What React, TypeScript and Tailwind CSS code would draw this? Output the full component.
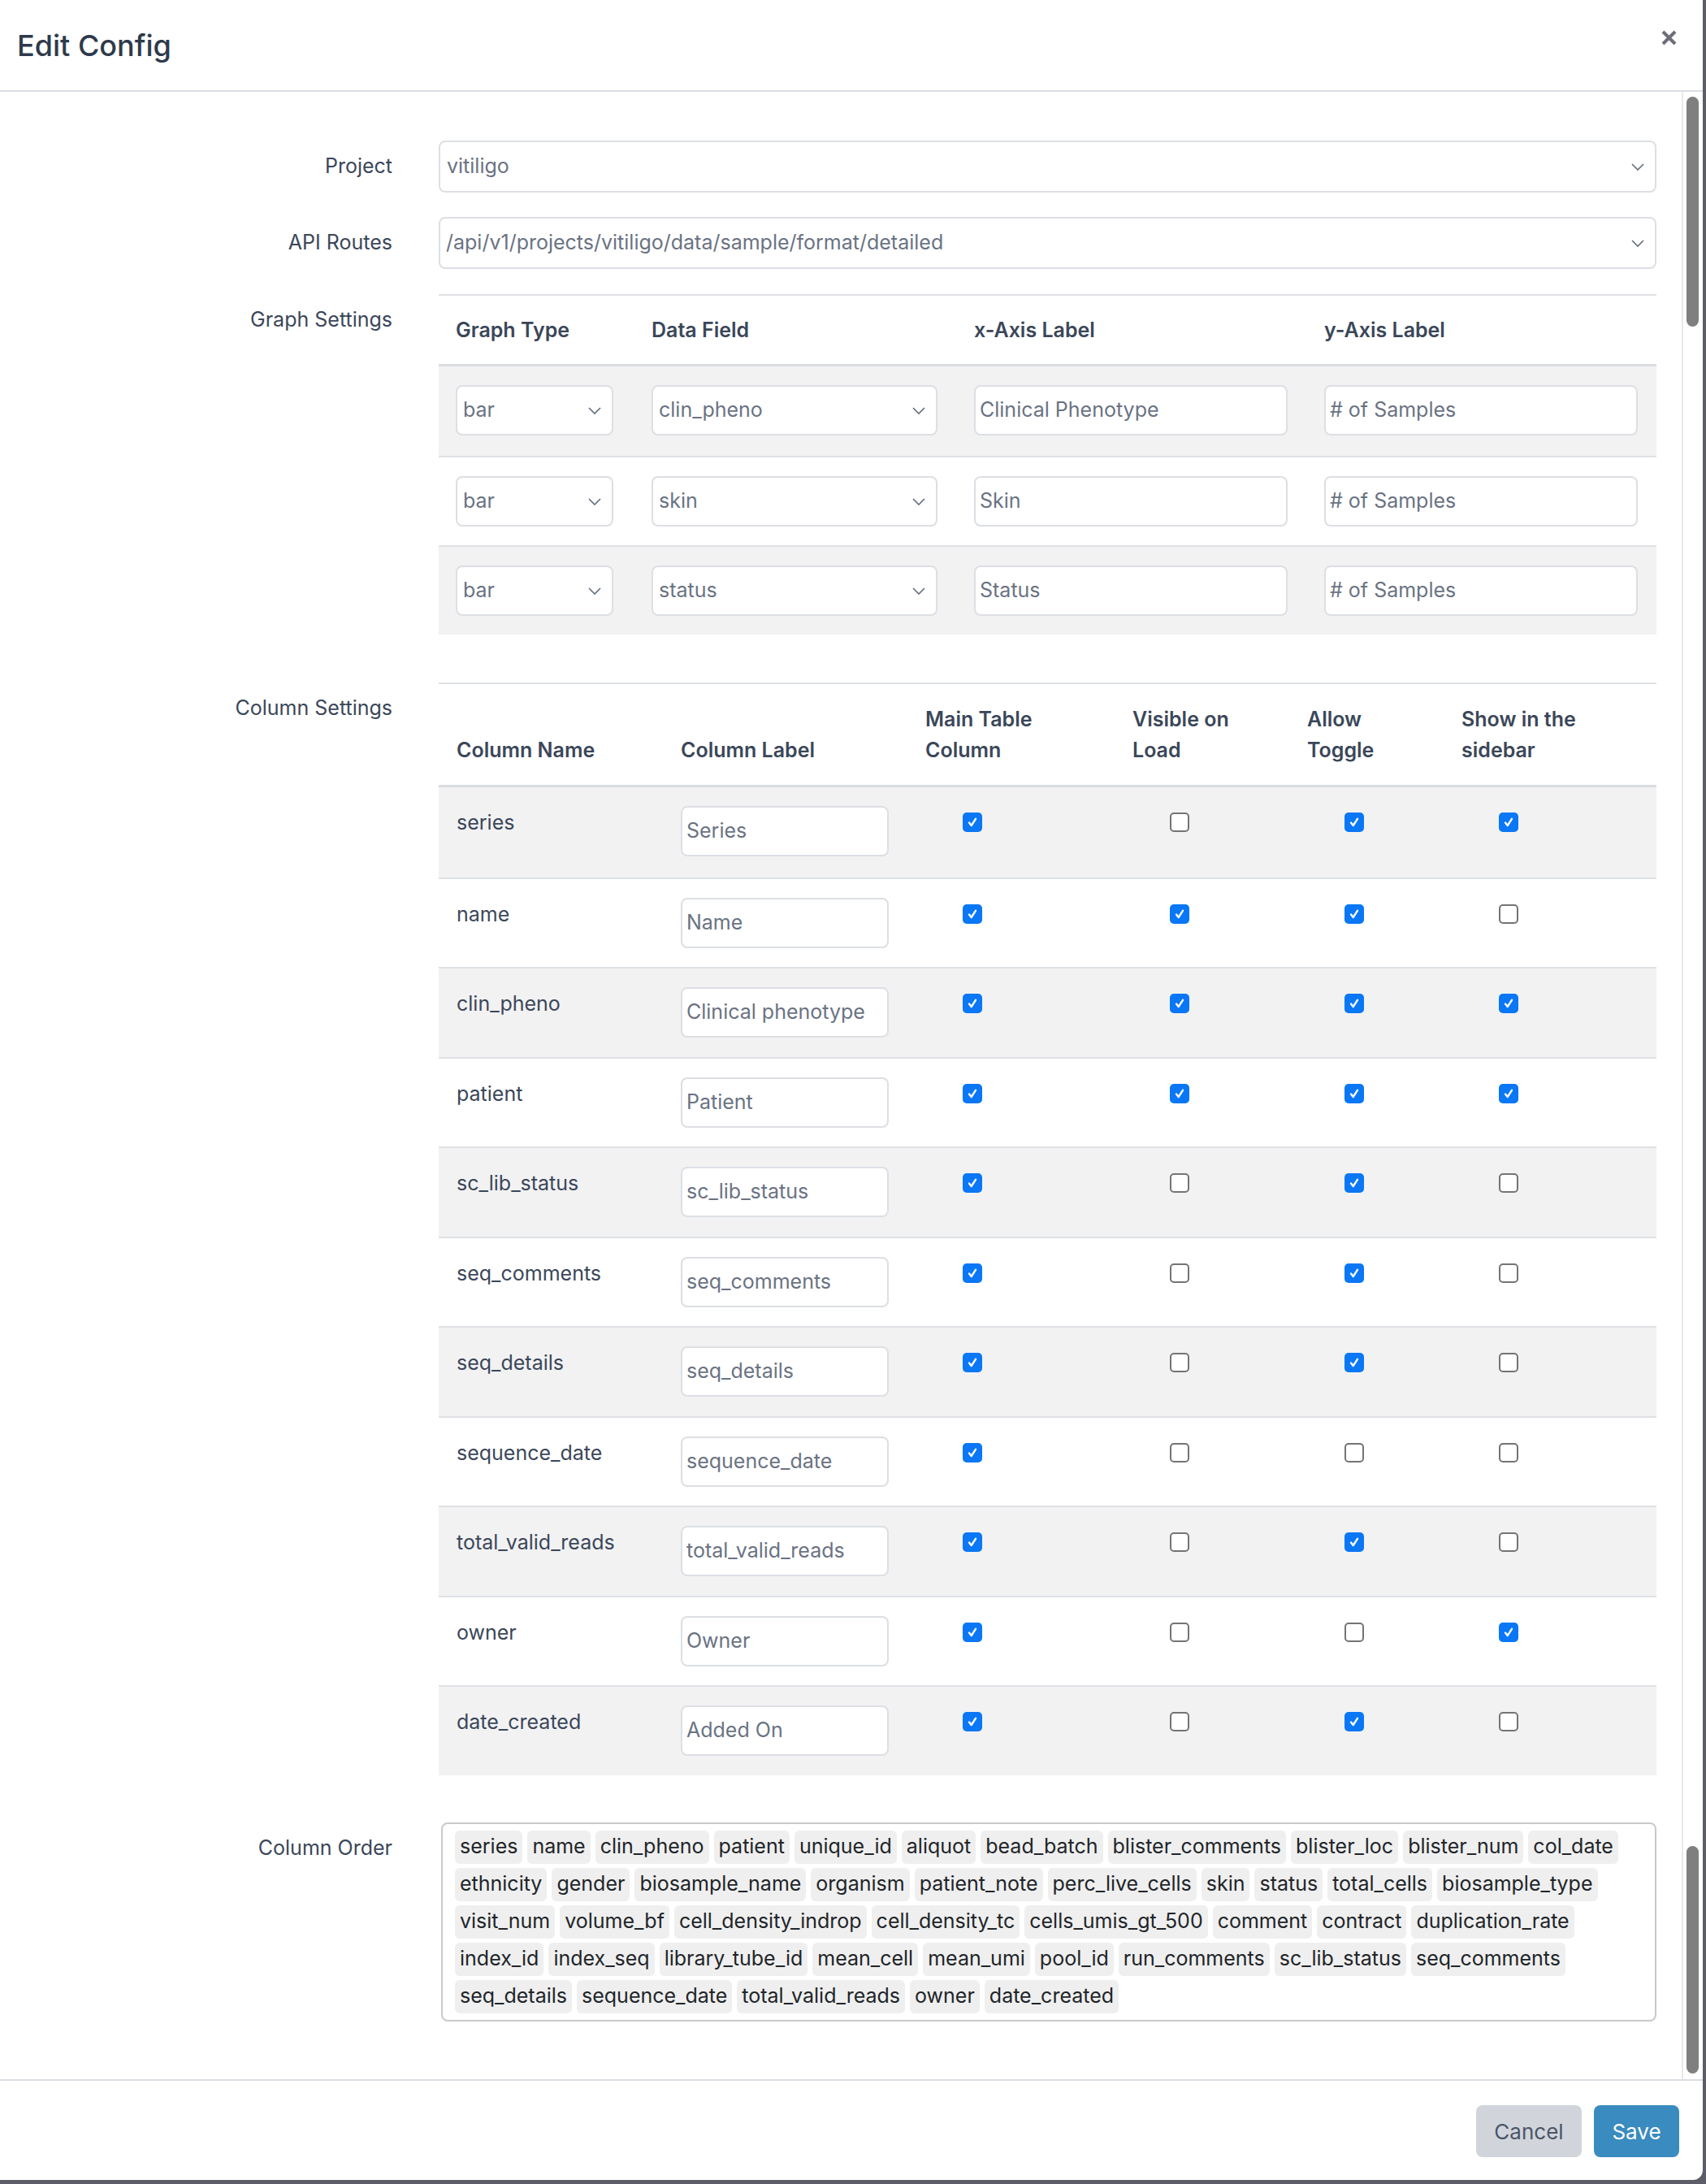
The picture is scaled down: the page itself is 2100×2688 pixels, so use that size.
import React from 'react';

/**
 * Edit Config modal – graph + column settings
 */

const GRAPH_ROWS = [
  { type: 'bar', field: 'clin_pheno', x: 'Clinical Phenotype', y: '# of Samples' },
  { type: 'bar', field: 'skin', x: 'Skin', y: '# of Samples' },
  { type: 'bar', field: 'status', x: 'Status', y: '# of Samples' },
];

// [name, label, main, visible, toggle, sidebar]
const COLUMNS: [string, string, boolean, boolean, boolean, boolean][] = [
  ['series', 'Series', true, false, true, true],
  ['name', 'Name', true, true, true, false],
  ['clin_pheno', 'Clinical phenotype', true, true, true, true],
  ['patient', 'Patient', true, true, true, true],
  ['sc_lib_status', 'sc_lib_status', true, false, true, false],
  ['seq_comments', 'seq_comments', true, false, true, false],
  ['seq_details', 'seq_details', true, false, true, false],
  ['sequence_date', 'sequence_date', true, false, false, false],
  ['total_valid_reads', 'total_valid_reads', true, false, true, false],
  ['owner', 'Owner', true, false, false, true],
  ['date_created', 'Added On', true, false, true, false],
];

const ORDER_ROWS = [
  ['series', 'name', 'clin_pheno', 'patient', 'unique_id', 'aliquot', 'bead_batch', 'blister_comments', 'blister_loc', 'blister_num', 'col_date'],
  ['ethnicity', 'gender', 'biosample_name', 'organism', 'patient_note', 'perc_live_cells', 'skin', 'status', 'total_cells', 'biosample_type'],
  ['visit_num', 'volume_bf', 'cell_density_indrop', 'cell_density_tc', 'cells_umis_gt_500', 'comment', 'contract', 'duplication_rate'],
  ['index_id', 'index_seq', 'library_tube_id', 'mean_cell', 'mean_umi', 'pool_id', 'run_comments', 'sc_lib_status', 'seq_comments'],
  ['seq_details', 'sequence_date', 'total_valid_reads', 'owner', 'date_created'],
];

function Chevron() {
  return (
    <svg width="16" height="9" viewBox="0 0 16 9" fill="none" className="shrink-0">
      <path d="M1 1l7 7 7-7" stroke="#5f6b7a" strokeWidth="1.6" />
    </svg>
  );
}

function Select({ value, className }: { value: string; className: string }) {
  return (
    <div
      className={`flex items-center justify-between rounded-[8px] border-2 border-[#dcdfe4] bg-white pl-[7px] pr-[13px] text-[25px] text-[#6a7383] ${className}`}
    >
      <span>{value}</span>
      <Chevron />
    </div>
  );
}

function TextInput({ value, className }: { value: string; className: string }) {
  return (
    <div
      className={`flex items-center rounded-[8px] border-2 border-[#dcdfe4] bg-white pl-[5px] text-[25px] text-[#6a7383] ${className}`}
    >
      {value}
    </div>
  );
}

function Checkbox({ checked }: { checked: boolean }) {
  return (
    <div className="flex h-[40px] items-center pl-[68px]">
      {checked ? (
        <div className="flex h-[24px] w-[24px] items-center justify-center rounded-[5px] bg-[#0a77f6]">
          <svg width="16" height="16" viewBox="0 0 16 16" fill="none">
            <path d="M4 8.6l2.7 3.4L12 3.8" stroke="white" strokeWidth="2.4" strokeLinecap="round" strokeLinejoin="round" />
          </svg>
        </div>
      ) : (
        <div className="h-[24px] w-[24px] rounded-[5px] border-2 border-[#747474] bg-white" />
      )}
    </div>
  );
}

function FieldLabel({ children }: { children: React.ReactNode }) {
  return (
    <div className="flex h-[64px] items-center justify-end text-[25px] text-[#3b4759]">{children}</div>
  );
}

export default function App() {
  return (
    <div className="flex h-[2688px] w-[2100px] bg-[#5d5d69] font-['Inter',sans-serif]">
      <div className="flex h-[2683px] w-[2096px] flex-col overflow-hidden rounded-br-[12px] bg-white">
        {/* Header */}
        <div className="flex h-[113px] shrink-0 items-center justify-between border-b-2 border-[#dadde2] pl-[21px] pr-[32px]">
          <h1 className="text-[36px] font-medium text-[#2e3a4b]">Edit Config</h1>
          <svg width="19" height="19" viewBox="0 0 19 19" className="mb-[18px]">
            <path d="M2 2l15 15M17 2L2 17" stroke="#6e6e7b" strokeWidth="4" />
          </svg>
        </div>

        {/* Body */}
        <div className="flex min-h-0 flex-1">
          <div className="flex-1 pr-[31px] pt-[60px]">
            <div className="grid grid-cols-[483px_1fr] gap-x-[57px]">
              <FieldLabel>Project</FieldLabel>
              <Select value="vitiligo" className="h-[64px] pl-[8px]" />

              <div className="mt-[30px]">
                <FieldLabel>API Routes</FieldLabel>
              </div>
              <Select value="/api/v1/projects/vitiligo/data/sample/format/detailed" className="mt-[30px] h-[64px]" />

              {/* Graph settings */}
              <div className="mt-[31px]">
                <FieldLabel>Graph Settings</FieldLabel>
              </div>
              <div className="mt-[31px] border-t-2 border-[#dee1e5]">
                <div className="grid grid-cols-[241px_397px_431px_1fr] border-b-[3px] border-[#d9dce1] text-[25px] font-semibold leading-[36px] text-[#3b4759]">
                  {['Graph Type', 'Data Field', 'x-Axis Label', 'y-Axis Label'].map((h) => (
                    <div key={h} className="py-[24px] pl-[21px]">
                      {h}
                    </div>
                  ))}
                </div>
                {GRAPH_ROWS.map((r, i) => (
                  <div
                    key={r.field}
                    className={`grid h-[110px] grid-cols-[241px_397px_431px_1fr] pt-[23px] ${i % 2 === 0 ? 'bg-[#f2f2f3]' : 'bg-white'} ${i > 0 ? 'border-t-2 border-[#dee1e5]' : ''}`}
                  >
                    <div className="pl-[21px]">
                      <Select value={r.type} className="h-[62px] w-[194px]" />
                    </div>
                    <div className="pl-[21px]">
                      <Select value={r.field} className="h-[62px] w-[352px]" />
                    </div>
                    <div className="pl-[21px]">
                      <TextInput value={r.x} className="h-[62px] w-[386px]" />
                    </div>
                    <div className="pl-[21px]">
                      <TextInput value={r.y} className="h-[62px] w-[386px]" />
                    </div>
                  </div>
                ))}
              </div>

              {/* Column settings */}
              <div className="mt-[59px]">
                <FieldLabel>Column Settings</FieldLabel>
              </div>
              <div className="mt-[59px] border-t-2 border-[#dee1e5]">
                <div className="grid grid-cols-[276px_301px_255px_215px_190px_1fr] items-end border-b-[3px] border-[#d9dce1] py-[24px] text-[25px] font-semibold leading-[38px] text-[#3b4759]">
                  <div className="pl-[22px]">Column Name</div>
                  <div className="pl-[22px]">Column Label</div>
                  <div className="pl-[22px]">
                    Main Table
                    <br />
                    Column
                  </div>
                  <div className="pl-[22px]">
                    Visible on
                    <br />
                    Load
                  </div>
                  <div className="pl-[22px]">
                    Allow
                    <br />
                    Toggle
                  </div>
                  <div className="pl-[22px]">
                    Show in the
                    <br />
                    sidebar
                  </div>
                </div>
                {COLUMNS.map(([name, label, a, b, c, d], i) => (
                  <div
                    key={name}
                    className={`grid h-[110.5px] grid-cols-[276px_301px_255px_215px_190px_1fr] pt-[23px] ${i % 2 === 0 ? 'bg-[#f2f2f3]' : 'bg-white'} ${i > 0 ? 'border-t-2 border-[#dee1e5]' : ''}`}
                  >
                    <div className="pl-[22px] text-[25px] leading-[40px] text-[#3b4759]">{name}</div>
                    <div className="pl-[22px]">
                      <TextInput value={label} className="h-[62px] w-[256px]" />
                    </div>
                    <Checkbox checked={a} />
                    <Checkbox checked={b} />
                    <Checkbox checked={c} />
                    <Checkbox checked={d} />
                  </div>
                ))}
              </div>

              {/* Column order */}
              <div className="mt-[58px]">
                <FieldLabel>Column Order</FieldLabel>
              </div>
              <div className="ml-[3px] mt-[58px] flex flex-col gap-[5px] rounded-[8px] border-2 border-[#c9c9cc] px-[15px] py-[8px]">
                {ORDER_ROWS.map((row, i) => (
                  <div key={i} className="flex gap-[6px]">
                    {row.map((c) => (
                      <span
                        key={c}
                        className="flex h-[41px] items-center rounded-[6px] bg-[#efefef] px-[6px] text-[25px] text-[#212529]"
                      >
                        {c}
                      </span>
                    ))}
                  </div>
                ))}
              </div>
            </div>
          </div>

          {/* Scrollbar */}
          <div className="flex w-[26px] shrink-0 flex-col justify-between border-l-2 border-[#e8e8e8] pb-[7px] pl-[4px] pt-[6px]">
            <div className="h-[283px] w-[15px] rounded-full bg-[#7f7f7f]" />
            <div className="h-[280px] w-[15px] rounded-full bg-[#7f7f7f]" />
          </div>
        </div>

        {/* Footer */}
        <div className="flex h-[124px] shrink-0 items-start justify-end gap-[15px] border-t-2 border-[#dadde2] pr-[29px] pt-[30px]">
          <button className="h-[64px] w-[130px] rounded-[8px] bg-[#d1d5db] text-[26px] text-[#4a5568]">Cancel</button>
          <button className="h-[64px] w-[105px] rounded-[8px] bg-[#3a8bbf] text-[26px] text-white">Save</button>
        </div>
      </div>
    </div>
  );
}
